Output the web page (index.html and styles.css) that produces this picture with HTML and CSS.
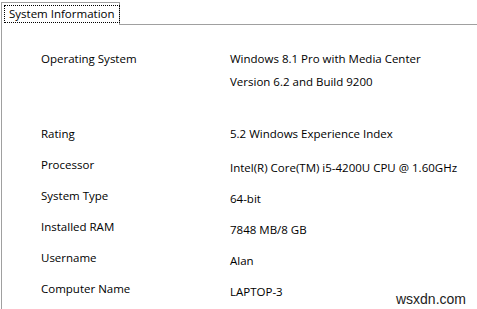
FILE: index.html
```html
<!DOCTYPE html>
<html lang="en">
<head>
  <meta charset="UTF-8" />
  <title>System Information</title>
  <link rel="stylesheet" href="styles.css">
</head>
<body>

  <!-- Tab strip -->
  <div class="tabs">
    <div class="tab"><span class="tab-label">System Information</span></div>
    <div class="tab-fill"></div>
  </div>

  <!-- Tab page -->
  <div class="panel">
    <div class="row row-os">
      <div class="label">Operating System</div>
      <div class="value">Windows 8.1 Pro with Media Center<br>Version 6.2 and Build 9200</div>
    </div>
    <div class="row">
      <div class="label">Rating</div>
      <div class="value">5.2 Windows Experience Index</div>
    </div>
    <div class="row low">
      <div class="label">Processor</div>
      <div class="value">Intel(R) Core(TM) i5-4200U CPU @ 1.60GHz</div>
    </div>
    <div class="row low">
      <div class="label">System Type</div>
      <div class="value">64-bit</div>
    </div>
    <div class="row low">
      <div class="label">Installed RAM</div>
      <div class="value">7848 MB/8 GB</div>
    </div>
    <div class="row low">
      <div class="label">Username</div>
      <div class="value">Alan</div>
    </div>
    <div class="row low">
      <div class="label">Computer Name</div>
      <div class="value">LAPTOP-3</div>
    </div>
  </div>

  <div class="watermark">wsxdn.com</div>

</body>
</html>
```

FILE: styles.css
```css
* {
  box-sizing: border-box;
}
html, body {
  margin: 0;
  padding: 0;
  height: 100%;
  background-color: #ffffff;
  color: #000;
  font-family: "Open Sans", "Noto Sans", sans-serif;
  font-size: 11.5px;
  overflow: hidden;
}
body {
  position: relative;
}
.tabs {
  display: flex;
  padding: 2px 0 0 1px;
  height: 25px;
}
.tab {
  width: 119px;
  border: 1px solid #a0a0a0;
  border-bottom: none;
  padding: 2px 0 0 2px;
}
.tab-label {
  display: inline-block;
  white-space: nowrap;
  border: 1px dotted #000;
  padding: 0 4px 0 4px;
  line-height: 16px;
}
.tab-fill {
  flex: 1;
  border-bottom: 1px solid #a0a0a0;
}
.panel {
  margin-left: 1px;
  height: calc(100% - 25px);
  border-left: 1px solid #a0a0a0;
  padding: 22px 0 0 39px;
}
.row {
  display: grid;
  grid-template-columns: 189px auto;
  line-height: 23px;
  height: 31px;
}
.row-os {
  height: 75px;
}
.low .value {
  padding-top: 3px;
}
.watermark {
  position: absolute;
  right: 11px;
  bottom: 2px;
  font-family: "Liberation Sans", Arial, sans-serif;
  font-size: 14px;
  color: #222;
}
```
